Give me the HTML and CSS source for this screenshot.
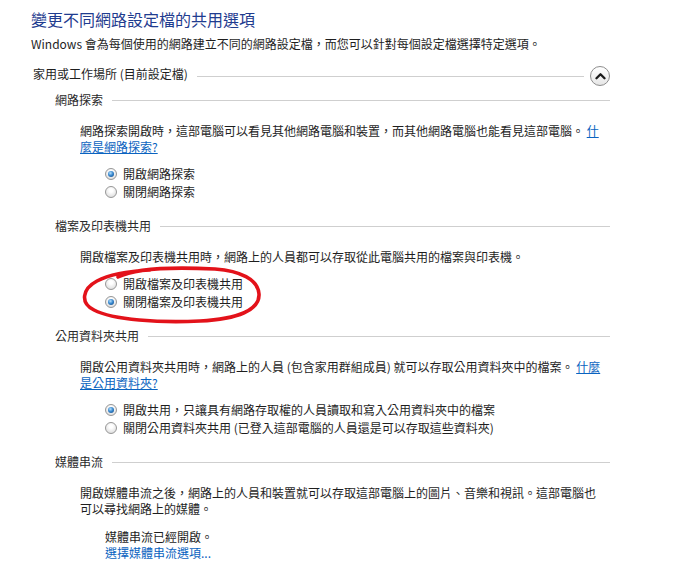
FILE: index.html
```html
<!DOCTYPE html>
<html lang="zh-Hant">
<head>
    <meta charset="UTF-8">
    <title>進階共用設定</title>
    <link rel="stylesheet" href="styles.css">
</head>
<body>
    <div class="page">
        <h1 class="title">變更不同網路設定檔的共用選項</h1>
        <p class="intro">Windows 會為每個使用的網路建立不同的網路設定檔，而您可以針對每個設定檔選擇特定選項。</p>

        <div class="group-head">
            <span class="group-name">家用或工作場所 (目前設定檔)</span>
            <span class="rule"></span>
            <button class="collapse-btn" type="button" aria-label="摺疊">
                <svg width="11" height="8" viewBox="0 0 11 8"><polyline points="1.5,6.3 5.5,2.3 9.5,6.3" fill="none" stroke="#1a1a1a" stroke-width="2.3" stroke-linecap="round" stroke-linejoin="round"/></svg>
            </button>
        </div>

        <div class="section">
            <div class="section-head"><span>網路探索</span><span class="rule"></span></div>
            <p class="desc">網路探索開啟時，這部電腦可以看見其他網路電腦和裝置，而其他網路電腦也能看見這部電腦。 <a href="#">什<br>麼是網路探索?</a></p>
            <ul class="options">
                <li><span class="radio checked"></span>開啟網路探索</li>
                <li><span class="radio"></span>關閉網路探索</li>
            </ul>
        </div>

        <div class="section">
            <div class="section-head"><span>檔案及印表機共用</span><span class="rule"></span></div>
            <p class="desc">開啟檔案及印表機共用時，網路上的人員都可以存取從此電腦共用的檔案與印表機。</p>
            <ul class="options">
                <li><span class="radio"></span>開啟檔案及印表機共用</li>
                <li><span class="radio checked"></span>關閉檔案及印表機共用</li>
            </ul>
        </div>

        <div class="section">
            <div class="section-head"><span>公用資料夾共用</span><span class="rule"></span></div>
            <p class="desc">開啟公用資料夾共用時，網路上的人員 (包含家用群組成員) 就可以存取公用資料夾中的檔案。 <a href="#">什麼<br>是公用資料夾?</a></p>
            <ul class="options">
                <li><span class="radio checked"></span>開啟共用，只讓具有網路存取權的人員讀取和寫入公用資料夾中的檔案</li>
                <li><span class="radio"></span>關閉公用資料夾共用 (已登入這部電腦的人員還是可以存取這些資料夾)</li>
            </ul>
        </div>

        <div class="section">
            <div class="section-head"><span>媒體串流</span><span class="rule"></span></div>
            <p class="desc">開啟媒體串流之後，網路上的人員和裝置就可以存取這部電腦上的圖片、音樂和視訊。這部電腦也<br>可以尋找網路上的媒體。</p>
            <div class="status">
                <div>媒體串流已經開啟。</div>
                <a href="#" class="plain-link">選擇媒體串流選項...</a>
            </div>
        </div>
    </div>

    <!-- red hand-drawn mark over the file sharing options -->
    <svg class="marker" width="677" height="576" viewBox="0 0 677 576">
        <path d="M118 277 C 135 268, 175 267, 215 269 C 240 271, 258 279, 259 294 C 260 310, 238 319, 200 321 C 160 323, 113 320, 94 310 C 80 303, 82 289, 97 281 C 110 274, 130 271, 150 270" fill="none" stroke="#e3121a" stroke-width="3.6" stroke-linecap="round"/>
    </svg>
</body>
</html>
```

FILE: styles.css
```css
body {
    margin: 0;
    background: #fff;
    font-family: "Noto Sans CJK TC", "Noto Sans", sans-serif;
    font-size: 12px;
    color: #1e1e1e;
    position: relative;
}

.page {
    width: 579px;
    padding: 8px 0 0 31px;
}

.title {
    margin: 0;
    font-size: 16px;
    line-height: 22px;
    font-weight: normal;
    color: #1f3c8f;
}

.intro {
    margin: 5px 0 0;
    line-height: 18px;
    white-space: nowrap;
}

.group-head {
    display: flex;
    align-items: center;
    height: 20px;
    margin-top: 13px;
}

.group-name {
    line-height: 18px;
    padding: 0 9px 5px 2px;
}

.rule {
    flex: 1;
    border-top: 1px solid #cfcfcf;
}

.collapse-btn {
    width: 20px;
    height: 20px;
    margin: 0 0 0 6px;
    padding: 0;
    border: 1px solid #8d8d8d;
    border-radius: 50%;
    background: linear-gradient(#ffffff, #e6e6e6);
    display: flex;
    align-items: center;
    justify-content: center;
}

.section {
    margin: 5px 0 0 24px;
}

.section + .section {
    margin-top: 16px;
}

.section-head {
    display: flex;
    align-items: center;
    height: 18px;
    line-height: 18px;
    color: #2a2a2a;
}

.section-head span:first-child {
    padding-right: 9px;
}

.desc {
    margin: 14px 0 0 25px;
    line-height: 16px;
    white-space: nowrap;
}

.desc a {
    color: #0a63c0;
    text-decoration: underline;
}

.options {
    list-style: none;
    margin: 10px 0 0 50px;
    padding: 0;
}

.options li {
    display: flex;
    align-items: center;
    height: 18px;
    line-height: 18px;
}

.radio {
    width: 10px;
    height: 10px;
    margin-right: 6px;
    border: 1px solid #979797;
    border-radius: 50%;
    background: radial-gradient(circle at 50% 35%, #ffffff 20%, #d4d4d4 100%);
    display: flex;
    align-items: center;
    justify-content: center;
    flex-shrink: 0;
}

.radio.checked::after {
    content: "";
    width: 6px;
    height: 6px;
    border-radius: 50%;
    background: radial-gradient(circle at 40% 35%, #b7e0fb 0%, #3a8ad0 45%, #0d3f78 100%);
}

.status {
    margin: 12px 0 0 50px;
    line-height: 16px;
}

.plain-link {
    color: #0a63c0;
    text-decoration: none;
}

.marker {
    position: absolute;
    left: 0;
    top: 0;
    pointer-events: none;
}
```
